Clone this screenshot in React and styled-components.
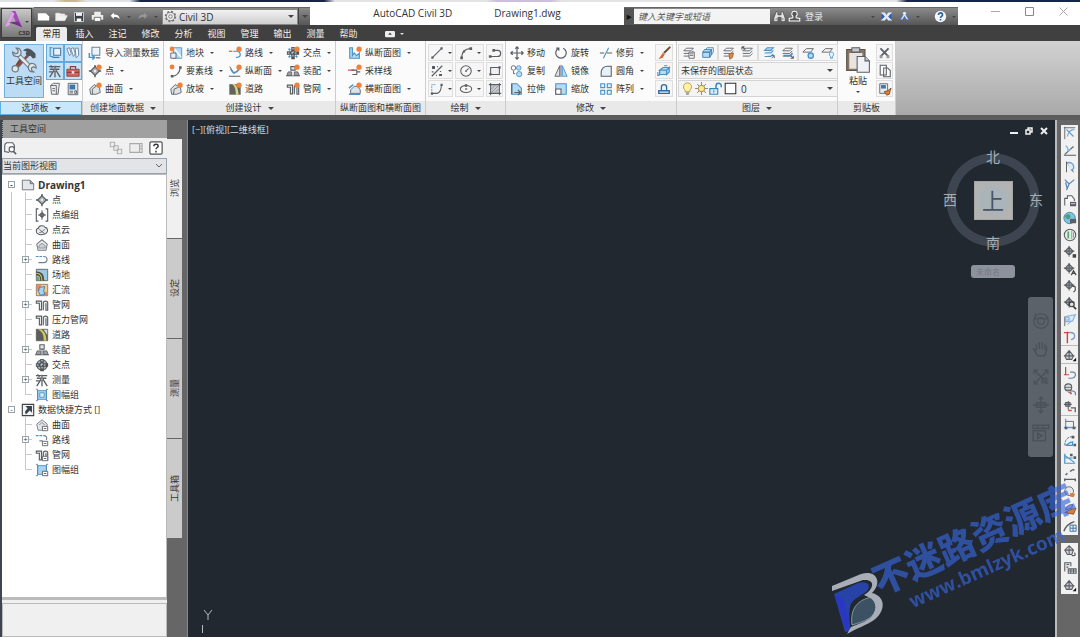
import React, { useState } from 'react'
import styled, { createGlobalStyle } from 'styled-components'

const GlobalStyle = createGlobalStyle`
  * {
    box-sizing: border-box;
  }

  body {
    margin: 0;
    background: #666;
    color: #333;
    font-family: 'Open Sans', 'Noto Sans CJK SC', sans-serif;
    font-size: 9px;
    line-height: 14px;
    overflow: hidden;
  }

  button, input, select {
    font: inherit;
    color: inherit;
    margin: 0;
    padding: 0;
    border: 0;
    border-radius: 0;
    background: none;
    appearance: none;
    outline: none;
  }

  ul {
    list-style: none;
    margin: 0;
    padding: 0;
  }
`

/* icons, all on a 16 x 16 grid */

const K = '#5a5e63'
const B = '#4a93c9'
const L = '#b5dcf3'
const O = '#f0813a'
const R = '#c8463c'

const dot = <circle cx='12.6' cy='3.6' r='3' fill={O} />
const dotLeft = <circle cx='3.5' cy='3.5' r='2.8' fill={O} />
const clipTag = <path d='M8.500 9.500h6v5h-6zM10 12h3' fill='#fff' stroke={K} />
const diamond = <><path d='M8 1v14M1 8h14' stroke={K} strokeWidth='1.600' /><path d='M8 3l5 5-5 5-5-5z' fill='#a9afb6' stroke={K} strokeWidth='1.300' /><circle cx='8' cy='8' r='1.500' fill='#e9ebed' /></>
const surface = <path d='M2 8l5-5 6 3 1 6-5 2H3z' fill='#dfe2e5' stroke={K} />
const page = <><path d='M1.500 2.500h9l4 4v7h-13z' fill='#e4e7ea' stroke='#686c70' /><path d='M10.500 2.500v4h4' fill='#aaa' stroke='#686c70' /></>
const layers = <path d='M2 5.500l3-3h8l-3 3zM2 8.500h8l3-3M2 11.500h8l3-3' fill='#f4f6f8' stroke={K} />
const pipes = <><path d='M1.500 3.500h6v10H5V6H1.500z' fill='#e9ebed' stroke={K} strokeWidth='1.300' /><path d='M9.500 14V5c0-2 5-2 5 0v9h-2V6' fill='#e9ebed' stroke={K} strokeWidth='1.300' /></>
const node = <path d='M7 1v12M1 7h12M7 2.500 11.500 7 7 11.500 2.500 7z' fill='#a9afb6' stroke={K} strokeWidth='1.400' />

const art = {
  file: page,
  newFile: <path d='M1 4h10l4 4v5H1z' fill='#fff' />,
  open: <path d='M1 13V4h5l1 1h5v2M1 13l3-6h11l-3 6z' fill='#f2f2f2' stroke='#e8e8e8' />,
  save: <><path d='M2 2h12v12H2z' fill='#3b4046' stroke='#e8e8e8' /><path d='M4 2.500h8v4H4z' fill='#eef4fa' /><path d='M5 10h6v4H5z' fill='#fff' /></>,
  print: <><path d='M4 2h8v4H4zM1 6h14v6H1z' fill='#eee' /><path d='M4 9h8v5H4z' fill='#fff' stroke='#555' /></>,
  undo: <path d='M6 3 2 7l4 4V8.500c4 0 6 .5 7 3C13 7 10 5.500 6 5.500z' fill='#fff' />,
  redo: <path d='M10 3l4 4-4 4V8.500c-4 0-6 .5-7 3C3 7 6 5.500 10 5.500z' fill='#969696' />,
  gear: <><circle cx='8' cy='8' r='6' fill='none' stroke='#6b6b6b' strokeWidth='2' strokeDasharray='2.400 2.300' /><circle cx='8' cy='8' r='5' fill='#eee' stroke='#6b6b6b' /><circle cx='8' cy='8' r='2.200' fill='none' stroke='#6b6b6b' /></>,
  binocular: <><path d='M4 2h2v4h4V2h2l3 8v4h-5V9H6v5H1v-4z' fill='#e6e6e6' stroke='#444' strokeWidth='.8' /><path d='M3 11h2M11 11h2' stroke='#555' /></>,
  user: <path d='M8 1.500a3.300 3.300 0 0 1 2 6V9.500l4.500 1v3h-13v-3l4.500-1V7.500a3.300 3.300 0 0 1 2-6z' fill='#555' stroke='#fff' strokeWidth='1.300' />,
  exchange: <><path d='M1 3h5l2 3 2-3h5l-4 5 4 5h-5l-2-3-2 3H1l4-5z' fill='#e1ebf8' /><path d='M2 4l4 4-4 4zM14 4l-4 4 4 4z' fill='#2f5fb5' /></>,
  app360: <><path d='M8 3 2.500 12h3L8 8l2.500 4h3z' fill='#dce8f8' stroke='#3d6cbd' /><circle cx='8' cy='4' r='2' fill='#dce8f8' /></>,
  help: <><circle cx='8' cy='8' r='7' fill='#f2f6fb' /><path d='M5.500 6c0-3.500 5-3.200 5 0 0 1.800-2.500 1.700-2.500 3.800M8 11v2' fill='none' stroke='#2b5f9d' strokeWidth='2' /></>,
  featured: <><rect x='0' y='3' width='16' height='10' rx='2' fill='#eee' /><path d='M8 5.500l3 3.500H5z' fill='#444' /></>,

  wrench: <>
    <path d='M6.200 7.800 3 12.600' stroke='#7c4337' strokeWidth='1.800' strokeLinecap='round' />
    <path d='M11 4.500 3 13.500' stroke='#8a5044' strokeWidth='1.600' strokeLinecap='round' />
    <path d='M7.500 2.500c2-1.600 4-1.200 5.500.4l1.600 1.500v2.300l-1.500.5-1.400-1.600-1.500.2-1.300-1.200.6-1.500z' fill='#4d545c' />
    <path d='M4.300 4.700 12 12.500' stroke='#6f7984' strokeWidth='2.600' />
    <path d='M4.300 4.700 12 12.500' stroke='#e4e9ee' strokeWidth='1.500' />
    <path d='M1.500 3.500l1.700 1 1.200-.4.300-1.400-1.200-1.500c1.700-.2 3 1 2.800 3-.2 1.400-1.300 2-2.500 1.800-1.500-.2-2.300-1.200-2.300-2.500z' fill='#dfe5ea' stroke='#6f7984' strokeWidth='.7' />
    <path d='M10.500 12c.2-1.500 1.200-2.200 2.500-2 1.200.2 2 1.200 1.900 2.600l-1.500-.8-1.200.8.300 1.600 1 .6c-2 .2-3.200-1-3-2.800z' fill='#dfe5ea' stroke='#6f7984' strokeWidth='.7' />
    <circle cx='3' cy='13' r='1.800' fill='#dfe5ea' stroke='#6f7984' strokeWidth='.7' />
  </>,
  panel: <><path d='M2.500 1v11M2.500 12H6M2.500 2H5' stroke={B} fill='none' strokeWidth='1.300' /><path d='M6.500 2.500h8v8h-8z' fill='#e5f2fb' stroke='#4878a4' strokeWidth='1.200' /><path d='M5 13h8' stroke='#4878a4' strokeWidth='1.400' /></>,
  props: <path d='M1 3l3-1 2 7-2 2zM5.500 3l3-1 2 7-2 3zM10.500 2.500h3.500l.5 8-3 3z' fill='#f3f8fc' stroke='#64819e' />,
  survey: <path d='M1 3h6M8 3h6M2 6h5M9 6h4M8 2v5M7 7l-5 8M9 7l5 8M8 8v7M3 1.500l2 3M1 9h4' fill='none' stroke={K} strokeWidth='1.500' />,
  toolbox: <><path d='M1 6h14v8H1z' fill='#d9645c' stroke='#8c3f3a' /><path d='M5 6V3h6v3M1 9.500h14' fill='none' stroke='#8c3f3a' strokeWidth='1.300' /><path d='M6.500 8h3v3h-3z' fill='#f3dcd9' /></>,
  sheet: <path d='M3 4l3-2.500h7L11.500 14H4zM3 4h6.500v10M5 7.500h3M5 10h3' fill='#eceef0' stroke={K} />,
  tablet: <><path d='M2.500 1.500h11v13h-11z' fill='#e4e9ee' stroke={K} /><path d='M4 3h6.500v5.500H4z' fill='#3a76ad' /><path d='M4 10.500h4M4 12.500h4M10 10h2v3h-2z' stroke={K} fill='none' /></>,

  importSurvey: <><path d='M4.500 1.500h9v9h-9z' fill='#eaf4fb' stroke='#6d8194' strokeWidth='1.200' /><path d='M1.500 8v5H7M5 10.500 7.500 13 5 15.500' fill='none' stroke={B} strokeWidth='1.700' /><path d='M9 13.500h5' stroke={K} strokeWidth='1.300' /></>,
  point: diamond,
  pointNew: <>{diamond}{dot}</>,
  surface,
  surfaceNew: <>{surface}<path d='M5 14V8l4-3' fill='none' stroke={K} />{dot}</>,
  parcel: <><path d='M5 2h9.500v12H5z' fill={L} stroke={B} /><path d='M2 8h6v6H2z' fill='#eef1f3' stroke={K} /><path d='M6 3l8 10' fill='none' stroke='#fff' strokeWidth='1.600' />{dotLeft}</>,
  feature: <><path d='M3 14c6 0 9-4 10-10' fill='none' stroke={K} strokeWidth='1.400' /><path d='M2 12.500h3v3H2zM11.500 2.500h3v3h-3z' fill={K} />{dotLeft}</>,
  grading: <>{surface}<path d='M5 14l1-6 5-2' fill='none' stroke={K} />{dot}</>,
  align: <><path d='M6 6h3c4 0 5 2 5 4s-2 3-5 3' fill='none' stroke={B} strokeWidth='1.400' /><path d='M1 6h4' stroke={R} strokeWidth='1.200' />{dot}</>,
  profile: <><path d='M2 3l5 8 5-5M1 14h13' fill='none' stroke={K} strokeWidth='1.100' /><path d='M3 6l3 4 4-1 3-3' fill='none' stroke={B} strokeWidth='1.600' />{dot}</>,
  road: <><path d='M1.500 2.500h13v12h-13z' fill='#5f645c' /><path d='M4 2c4 2 5 7 5 12.500h3C12 9 10 4 7 2z' fill='#ddd28b' />{dot}</>,
  cross: <><circle cx='8' cy='8' r='6' fill='#aab1b8' stroke={K} strokeWidth='1.300' /><path d='M6 1v5H1v4h5v5h4v-5h5V6h-5V1z' fill='#4b5157' /><path d='M8 2v12M2 8h12' stroke='#fff' strokeDasharray='2 2' /></>,
  crossNew: <><path d='M6 1v5H1v4h5v5h4v-5h5V6h-5V1z' fill='#4b5157' /><path d='M8 2v12M2 8h12' stroke='#fff' strokeDasharray='2 2' /><path d='M3 3l2 2M3 13l2-2M11 11l2 2' stroke={B} strokeWidth='2' />{dot}</>,
  assembly: <><path d='M5.500 2h5v5h-5z' fill='#e3e6e8' stroke={K} strokeWidth='1.200' /><path d='M1 13l1.500-4h4V13zM15 13l-1.500-4h-4V13z' fill='#9ba2a9' stroke={K} /><path d='M8 7v6M0 13.500h16' stroke={K} /></>,
  assemblyNew: <><path d='M5.500 3h5v4h-5z' fill='#e3e6e8' stroke={K} strokeWidth='1.200' /><path d='M1 13l1.500-4h4V13zM15 13l-1.500-4h-4V13z' fill='#9ba2a9' stroke={K} /><path d='M0 13.500h16' stroke={K} />{dot}</>,
  pipes,
  pipesNew: <>{pipes}{dot}</>,
  profView: <><path d='M2 2v12h11V8l-3 3-3-3-2 3V2z' fill={L} stroke={B} strokeWidth='1.300' />{dot}</>,
  sample: <><path d='M4 7h6v5H5M10 9h4' fill='none' stroke={K} strokeWidth='1.200' /><path d='M0 7h7' stroke={R} strokeWidth='1.300' />{dot}</>,
  secView: <><path d='M3 13V9l4-4h4l3 4v4z' fill='#dfe3e7' stroke={K} /><path d='M1 14h13M1 7l5-4' stroke={B} strokeWidth='1.500' />{dot}</>,

  line: <><path d='M3 13 13 3' stroke={K} strokeWidth='1.200' /><path d='M1.500 12h2.500v2.500H1.500zM12 1.500h2.500V4H12z' fill={K} /></>,
  arc: <><path d='M3 13c0-6 4-10 10-10' fill='none' stroke={K} strokeWidth='1.400' /><path d='M1.500 12h3v3h-3zM12 1.500h3v3h-3zM4.500 5h2.500v2.500H4.500z' fill={K} /></>,
  pline: <><path d='M2 12h9a3 3 0 0 0 0-7H6' fill='none' stroke={K} strokeWidth='1.300' /><path d='M5 3.500h3v3H5zM1 10.500h3v3H1z' fill={K} /></>,
  xline: <path d='M2 14 14 2M3 3h2v2H3zM8 3h1M2 9h2M11 12h2v1h-2zM12 8v1M7 13h1' stroke={K} strokeWidth='1.400' />,
  circle: <><circle cx='8' cy='8' r='6' fill='none' stroke={K} strokeWidth='1.200' /><path d='M8 8l3-3M7 8h2M8 7v2' stroke={K} strokeWidth='1.200' /></>,
  rect: <><path d='M3 4h10v8H3z' fill='#eef0f2' stroke={K} strokeWidth='1.200' /><path d='M1.500 10.500H4V13H1.500zM12 2.500h2.500V5H12z' fill={K} /></>,
  spline: <><path d='M2 13h6c4-1 5-4 5-10' fill='none' stroke={K} strokeWidth='1.200' /><path d='M2 13V3h5' fill='none' stroke={B} strokeDasharray='2 1' /><path d='M1 12h2.500v2.500H1zM12 2h2.500v2.500H12z' fill={K} /></>,
  ellipse: <><ellipse cx='8' cy='8' rx='6.500' ry='4' fill='none' stroke={K} strokeWidth='1.200' /><path d='M7 8h2.500M8 7v2M7 3h2v2H7z' fill={K} stroke={K} /></>,
  hatch: <><path d='M3 3h10v10H3z' fill='#c9cdd1' stroke={K} strokeWidth='1.200' /><path d='M4 8l4-4M4 12l8-8M8 12l4-4' stroke='#8a8f95' /><path d='M1 3h2V1M13 1v2h2M1 13h2v2M13 15v-2h2' fill='none' stroke={K} strokeWidth='1.200' /></>,

  move: <path d='M8 1v14M1 8h14M6 3l2-2 2 2M6 13l2 2 2-2M3 6 1 8l2 2M13 6l2 2-2 2' fill='none' stroke={K} strokeWidth='1.400' />,
  rotate: <path d='M5.500 2.500a6 6 0 1 0 5 0M2.500 2.500h3v3' fill='none' stroke={K} strokeWidth='1.400' />,
  trim: <><path d='M1 8h5M9 8h6' stroke={K} strokeWidth='1.200' /><path d='M5 14 11 2' stroke={B} strokeWidth='1.200' /></>,
  copy: <><circle cx='4' cy='4.500' r='2.600' fill='#fff' stroke={K} /><circle cx='10' cy='4.500' r='2.600' fill={L} stroke={B} /><circle cx='10.500' cy='11.500' r='3' fill={L} stroke={B} /><path d='M4 8v3h2' fill='none' stroke={K} /></>,
  mirror: <><path d='M6.500 2v12H1z' fill='#dfe3e7' stroke={K} /><path d='M9.500 2v12H15z' fill={L} stroke={B} /><path d='M8 1v14' stroke={K} /></>,
  fillet: <path d='M2.500 14V9a7 7 0 0 1 7-6.500H14V14z' fill='#e7f1f8' stroke={K} strokeWidth='1.200' />,
  stretch: <><path d='M2 2h6l5 5v7H2z' fill={L} stroke={B} strokeWidth='1.200' /><path d='M5 12h7M9 9l3 3-3 3M2 2v12' fill='none' stroke={K} strokeWidth='1.300' /></>,
  scale: <><path d='M2 2h12v12H2z' fill={L} stroke={B} strokeWidth='1.200' /><path d='M2 8h6v6H2z' fill='#fff' stroke={K} strokeWidth='1.200' /></>,
  array: <path d='M2 2h4.500v4.500H2zM9.500 2H14v4.500H9.500zM2 9.500h4.500V14H2zM9.500 9.500H14V14H9.500z' fill='#e6f3fb' stroke={B} strokeWidth='1.300' />,
  brush: <><path d='M14.500 1.500 8 8' stroke='#6b4630' strokeWidth='2.200' strokeLinecap='round' /><path d='M7 7.500l2 2-2.500 4-5 1.500 3-4z' fill='#d7672d' /><path d='M6.500 7l3 3' stroke='#bbb' strokeWidth='1.300' /></>,
  explode: <><path d='M3 7l4-3h7l-3 3zM3 7h8v5H3zM11 7l3-3v5l-3 3z' fill={L} stroke={B} strokeWidth='1.400' /><path d='M1 9v4h2M8 2h4' fill='none' stroke={B} strokeWidth='1.300' /></>,
  offset: <path d='M2 13v-3h3V6a3 3 0 0 1 6 0v4h3v3zM5 10h6' fill='#e6f3fb' stroke='#35699a' strokeWidth='1.500' />,

  lay1: <>{layers}<path d='M8 7h6v7H8zM9 9h4M9 11h4' fill='#fff' stroke={K} /></>,
  lay2: <><path d='M2 7h8v6H2zM2 7l2-3h8l-2 3zM10 7l2-3v6l-2 3z' fill={L} stroke='#3f7fb5' /><path d='M5 4l2-2h7v5l-2 3' fill='none' stroke='#3f7fb5' /></>,
  lay3: <>{layers}<path d='M8 9l5-1-1 5-3 2z' fill='#e08a45' stroke='#a65a22' /></>,
  lay4: <>{layers}<path d='M1 1l4 3M1 1v3M1 1h3' stroke={K} strokeWidth='1.200' /></>,
  lay5: <><path d='M3 5l3-3h7l-3 3zM3 8h7l3-3M3 12h7l3-3' fill={L} stroke={B} strokeWidth='1.200' /><path d='M11 14l3-3M14 14v-3h-3' fill='none' stroke={K} /></>,
  lay6: <>{layers}<path d='M3 11h8l2-3' stroke={B} strokeWidth='2' fill='none' /><path d='M11 11l3 3M14 11v3h-3' fill='none' stroke={K} strokeWidth='1.200' /></>,
  lay7: <><path d='M1 7l4-4h8l-3 4z' fill='#f4f6f8' stroke={K} /><circle cx='10' cy='11' r='3' fill={L} stroke={B} strokeWidth='1.500' /></>,
  lay8: <><path d='M1 7l4-4h8l-3 4z' fill='#f4f6f8' stroke={K} /><path d='M12 7c3 0 3 4 1 5v2h-2v-2c-2-1-2-5 1-5z' fill='#e6f3fb' stroke={B} /></>,
  bulb: <><path d='M8 1a5 5 0 0 1 3 9v2H5v-2a5 5 0 0 1 3-9z' fill='#fff2a6' stroke='#b39434' /><path d='M6 13.500h4M6.500 15h3' stroke={K} /></>,
  sun: <><path d='M8 0v16M0 8h16M2.500 2.500l11 11M13.500 2.500l-11 11' stroke='#777' /><circle cx='8' cy='8' r='4' fill='#ffe98c' stroke='#8e7a3a' /></>,
  lock: <><path d='M1 7.500h9V14H1z' fill='#d9eefb' stroke='#3a86b9' strokeWidth='1.300' /><path d='M8 7V4.500a3 3 0 0 1 6 0V6' fill='none' stroke='#3a86b9' strokeWidth='1.700' /><path d='M5.500 9.500v2.500' stroke='#3a86b9' strokeWidth='1.300' /></>,
  swatch: <path d='M1.500 1.500h13v13h-13z' fill='#fff' stroke='#333' strokeWidth='1.300' />,
  paste: <><path d='M1.500 2h10.500v12H1.500z' fill='#857566' stroke='#5e5348' strokeWidth='.6' /><path d='M3 4h7.500v9H3z' fill='#e8e5e0' /><path d='M4.500 1h4.500v2.500H4.500z' fill='#c5c9cd' stroke={K} strokeWidth='.6' /><path d='M7.500 6H12l2.500 2.500v6.500h-7z' fill='#eef2f6' stroke={K} strokeWidth='.6' /><path d='M12 6v2.500h2.500' fill='#c4cad0' stroke={K} strokeWidth='.6' /></>,
  cut: <><path d='M3 3l10 10M13 3 3 13' stroke={K} strokeWidth='2.200' /><path d='M2 11.500h3.500V15H2zM10.500 11.500H14V15h-3.500z' fill='#999' /></>,
  pages: <path d='M2.500 1.500h7v11h-7zM6.500 4.500H11l3 3v7H6.500z' fill='#fff' stroke={K} strokeWidth='1.200' />,
  match: <><path d='M2 2h9v11H2z' fill='#e8edf2' stroke={K} /><path d='M3.500 3.500h5.500v4H3.500z' fill='#3a76ad' /><path d='M15 7l-4 3-4 1 3 4 3-1 1-4z' fill='#d77f38' stroke='#8a4e1f' /></>,

  find: <><path d='M2 4l2-2h7l2 3v4M2 4v8l5 1' fill='#fff' stroke={K} strokeWidth='1.300' /><circle cx='10' cy='9.500' r='3' fill='#fff' stroke={K} strokeWidth='1.300' /><path d='M12 12l3 3' stroke={K} strokeWidth='1.800' /></>,
  treeTool: <path d='M1.500 1.500h5v5h-5zM5.500 5.500h5v5h-5zM9.500 9.500h5v5h-5z' fill='#eee' stroke='#b0b0b0' strokeWidth='1.200' />,
  window: <path d='M1 3h14v10H1zM12 3v10M12.500 6H15M12.500 9H15' fill='#eee' stroke='#aaa' strokeWidth='1.200' />,
  helpBox: <><rect x='1' y='1' width='14' height='14' rx='1.500' fill='#fff' stroke='#555' strokeWidth='1.400' /><path d='M5.500 6c0-3 5-3 5 0 0 1.500-2.500 1.500-2.500 3.500M8 11v2' fill='none' stroke='#333' strokeWidth='1.600' /></>,
  pointGroup: <><path d='M4 1H1.500v14H4M12 1h2.500v14H12' fill='none' stroke={K} strokeWidth='1.300' /><path d='M8 2.500v11M3.500 8h9M8 5l3 3-3 3-3-3z' fill='#aeb4ba' stroke={K} strokeWidth='1.200' /></>,
  cloud: <><path d='M1.500 9c0-2 1-3 2.500-3 0-3 6-4 7.500-1 2.500 0 4 4 2 6-1 2.500-8 3-10 1.500C2 12 1.500 10 1.500 9z' fill='#e8eaec' stroke={K} strokeWidth='1.200' /><path d='M5 7l3 3 3-3M5 11l3-1 3 2' fill='none' stroke={K} /></>,
  tin: <><path d='M2 7l6-5 6 5-1.500 7h-9z' fill='#eceef0' stroke='#777d84' strokeWidth='1.200' /><path d='M4.500 8.500 8 6l3.500 2.500v3h-7z' fill='#cbd0d5' stroke='#868c93' /></>,
  route: <><path d='M1 4h9' stroke={B} strokeWidth='1.400' strokeDasharray='3 1' /><path d='M10 4c5 0 5 7 0 7H4' fill='none' stroke='#6d8196' strokeWidth='1.300' /></>,
  site: <><path d='M1.500 1.500h13v13h-13z' fill='#9cc9e6' stroke={K} /><path d='M1.500 4c7 0 9 4 9 10.500H6c0-5-1-6-4.500-6z' fill='#474c46' /><path d='M1.500 6c5 0 6.500 3 6.500 8.500' fill='none' stroke='#e0c548' strokeWidth='1.300' /><path d='M2 10h3v4H2z' fill='#78a567' /></>,
  catchment: <><path d='M1.500 1.500h13v13h-13z' fill='#f4d27a' stroke='#8b7468' /><path d='M2 2h5l-1 5-4 3z' fill='#e58e58' /><path d='M11 10h3v4H9z' fill='#e58e58' /><path d='M5 5l6-1-1 5 1 4-5 1-2-4z' fill='#a7d3f3' stroke='#2e79b7' /></>,
  highway: <><path d='M1.500 1.500h13v13h-13z' fill='#5b5f59' stroke={K} /><path d='M3 1.500c6 3 7 7 7 13h3C13 8 11 4 7 1.500z' fill='#d4c25e' /><path d='M10 2h4v6z' fill='#d3dfe7' /></>,
  frame: <><path d='M3 3h10v10H3z' fill='#a9d4f1' stroke={B} /><path d='M5.500 5.500h5v5h-5z' fill='#dff0fa' stroke={B} /><path d='M1 1.500h2v13H1M15 1.500h-2v13h2' fill='none' stroke='#4f83ad' /></>,
  shortcut: <><path d='M1.500 1.500h13v13h-13z' fill='#f1f3f5' stroke='#444' strokeWidth='1.300' /><path d='M5 3.500h7.500V11L10 8.500 5.500 13l-1-3L7.500 6z' fill='#39414b' /></>,
  tinRef: <><path d='M2 7l6-5 6 5-1.500 7h-9zM5 8l3-3 3 3' fill='#e3e6e9' stroke='#777d84' />{clipTag}</>,
  routeRef: <><path d='M1 3h9' stroke={B} strokeWidth='1.400' strokeDasharray='3 1' /><path d='M10 3c3 0 4 2 3 5M5 9h4' fill='none' stroke='#6d8196' strokeWidth='1.300' />{clipTag}</>,
  pipesRef: <>{pipes}{clipTag}</>,
  frameRef: <><path d='M3 3h10v10H3z' fill='#a9d4f1' stroke={B} /><path d='M1 1.500h2v13H1M15 1.500h-2v13h2' fill='none' stroke='#4f83ad' />{clipTag}</>,

  t1: <><path d='M1 2h13M2 1v14' stroke={K} fill='none' /><path d='M4 4l8 8M13 4c-4 0-7 3-8 8' stroke='#6b9ed0' strokeWidth='1.400' fill='none' /></>,
  t2: <><path d='M1 14h14M2 13 12 4' fill='none' stroke={K} strokeWidth='1.300' /><path d='M3 3l2 2 1 4 3-2' stroke='#7fb2e0' strokeWidth='1.600' fill='none' /></>,
  t3: <><path d='M4 14V2l8 12' fill='none' stroke={K} strokeWidth='1.100' /><path d='M5 3c6-1 8 3 7 7l-3 2' fill='#dcecf8' stroke='#6b9ed0' strokeWidth='1.500' /></>,
  t4: <path d='M2 3l5 5 6-5M4 15l3-7M3 6l2 8' fill='none' stroke='#5b86ad' strokeWidth='1.400' />,
  t5: <><path d='M2 13V5h3V2h5l3 4v2' fill='#f6f6f6' stroke={K} strokeWidth='1.200' /><path d='M8 9h7v5H8z' fill={K} /><path d='M9 11h5' stroke='#ddd' /></>,
  globe: <><circle cx='7.500' cy='8' r='6.500' fill='#7fc3e0' stroke='#4a7f95' /><path d='M2 6c4-5 8-1 6 2s-4 1-6-2z' fill='#4b9c83' /><path d='M8 9h7v5H8z' fill='#5a6068' /></>,
  globe2: <><circle cx='8' cy='8' r='6.500' fill='#e7ece9' stroke={K} strokeWidth='1.200' /><path d='M5 4h2v8H5z' fill='#4fae6f' /><path d='M10 3v10M12 5v6' stroke='#8a8f95' fill='none' /></>,
  t8: <>{node}<path d='M11 10.500h4v4h-4z' fill='#444' /></>,
  t9: <>{node}<path d='M9.500 15l2.500-5 3 5M10.500 13h3' fill='none' stroke='#444' strokeWidth='1.300' /></>,
  t10: <>{node}<path d='M10 8l4 1v4l-2 2' fill='#fff' stroke='#444' strokeWidth='1.300' /></>,
  t11: <>{node}<circle cx='10' cy='9.500' r='2.800' fill='#ddd' stroke='#333' strokeWidth='1.300' /><path d='M12 12l3 3' stroke='#333' strokeWidth='1.900' /></>,
  t12: <><path d='M2 15V4' stroke={K} /><path d='M3 4l11-2-3 7-8 1z' fill='#dcecf8' stroke='#7fb2e0' strokeWidth='1.300' /><path d='M4 5h3v3H4M5 13l4-3' fill='none' stroke='#6b9ed0' /></>,
  t13: <><path d='M1 3h6M5 2v13' stroke={R} strokeWidth='1.600' /><path d='M7 3c8-1 8 7 2 8' fill='none' stroke='#7f9bc4' strokeWidth='1.500' /></>,
  t14: <><path d='M2 9l5-6 5 6-2 4H4zM1 9h12M7 3v10' fill='#c7cbd0' stroke={K} strokeWidth='1.200' /><path d='M15 11v4h-4z' fill='#111' /></>,
  t15: <><path d='M3 1v9M1 10h6' stroke={R} strokeWidth='1.400' /><path d='M8 7h3c5 0 4 7-2 7H6' fill='none' stroke='#6f85a5' strokeWidth='1.400' /></>,
  t16: <><circle cx='6' cy='5' r='4' fill='#ddd' stroke={K} strokeWidth='1.200' /><path d='M2 5h8M3 8h6v3H6' fill='none' stroke={K} /><path d='M8 12h2' stroke={R} strokeWidth='1.600' /><path d='M10 9c4 0 5 3 4 5' fill='none' stroke='#6f85a5' strokeWidth='1.400' /></>,
  t17: <><path d='M6 1v10M1 5h9M3 3h5v4H3z' fill='#ccc' stroke={K} strokeWidth='1.200' /><path d='M6 12h4' stroke={R} strokeWidth='1.600' /><path d='M9 9h5v5' fill='none' stroke={K} strokeWidth='1.400' /></>,
  t18: <><path d='M3 2v12M1 12h14' stroke='#6b9ed0' strokeWidth='1.500' /><path d='M3 5h9v7' fill='none' stroke={K} /><path d='M11 11h3v3h-3zM2 11h3v3H2z' fill={K} /></>,
  t19: <><path d='M2 13C2 6 6 3 11 3' fill='none' stroke={K} strokeDasharray='3 1' /><path d='M3 13c3-1 4-4 8-4v4z' fill='#dcecf8' stroke={B} strokeWidth='1.400' /><path d='M10 2h3v3h-3zM12 11h3v3h-3z' fill={K} /></>,
  t20: <><path d='M2 3v11h12M2 5l11 8M3 8h8' fill='none' stroke={B} strokeWidth='1.400' /><path d='M8 3h3v3H8zM12 6h3v3h-3z' fill={K} /></>,
  t21: <path d='M2 13h12M3 8l2-2M8 4l3-2M2 12v3M14 12v3M11 2h2' fill='none' stroke={K} strokeWidth='1.600' />,
  t22: <><circle cx='7' cy='7' r='5' fill='#e6e9ec' stroke={K} /><path d='M8 9l6 1-2 4-4-1z' fill='#d77f38' /></>,
  t23: <><path d='M3 9c1-5 4-6 8-6l-1 4z' fill='#ddd' stroke={K} /><path d='M2 12l6-3 7-2-3 7-5-1z' fill='#d77f38' stroke='#8a4e1f' /></>,
  t24: <><path d='M1 14C3 8 6 5 13 3' fill='none' stroke={K} strokeWidth='1.600' /><path d='M8 7h7v7H8zM8 10.500h7M11.500 7v7' fill='#e6f3fb' stroke='#35699a' /></>,
  t25: <><path d='M2 7l5-5 5 5-2 5H5zM2 7h10M7 2v10' fill='#d3d6d9' stroke={K} strokeWidth='1.200' /><path d='M10 13c4 1 5-1 3-3' fill='none' stroke={K} strokeWidth='1.400' /></>,
  t26: <path d='M2 12V2h7v4M4 4h3M4 7h2M6 9h9v5H6zM6 11.500h9M9 9v5M12 9v5' fill='#e3e5e7' stroke={K} strokeWidth='1.200' />,

  wheel: <><circle cx='8' cy='8' r='6.500' fill='none' stroke='#4a5158' /><circle cx='8' cy='8' r='3' fill='none' stroke='#4a5158' /><path d='M3 1v5h10V3' fill='none' stroke='#4a5158' /></>,
  hand: <path d='M4 9V4M6.500 8V2M9 8V2M11.500 9V3.500M4 9 1.500 8 5 14h6l2-5V5' fill='none' stroke='#4a5158' strokeWidth='1.200' />,
  zoomAll: <path d='M2 2l12 12M14 2 2 14M2 5V2h3M11 2h3v3M2 11v3h3M9 9h4v4H9z' fill='none' stroke='#4a5158' strokeWidth='1.200' />,
  orbit: <path d='M8 1v14M1 8h14M6 3l2-2 2 2M4 6h8v4H4zM6 13l2 2 2-2' fill='none' stroke='#4a5158' strokeWidth='1.200' />,
  motion: <path d='M1 1h14v3H1zM5 1v3M10 1v3M1 6h11v9H1zM5 8l4 2.500L5 13z' fill='none' stroke='#4a5158' strokeWidth='1.200' />
}

const Svg = styled.svg`
  flex: none;
  display: block;
  width: ${props => props.$size}px;
  height: ${props => props.$size}px;
`

const Icon = ({ name, size = 14 }) => <Svg viewBox='0 0 16 16' $size={size} aria-hidden='true'>{art[name]}</Svg>

const Caret = styled.span`
  flex: none;
  width: 0;
  height: 0;
  border: ${props => props.$big ? 3 : 2}px solid transparent;
  border-top-color: ${props => props.$light ? '#ddd' : '#444'};
  border-bottom: 0;
`

/* title bar */

const Window = styled.div`
  display: flex;
  flex-direction: column;
  height: 100vh;
`

const DesktopEdge = styled.div`
  flex: none;
  height: 2px;
  background: linear-gradient(90deg, #dfe3e6 0 5%, #cbb98c 6% 7%, #dfe3e6 8% 12%, #182545 13% 30%, #e4e4e4 31% 45%, #cdbfdc 46% 51%, #e4e4e4 52% 83%, #15264a 84%);
`

const Header = styled.header`
  flex: none;
  display: grid;
  grid-template-columns: 34px 1fr;
`

const AppCorner = styled.div`
  grid-row: 1 / 3;
  padding: 6px 2px 2px 1px;
  background: linear-gradient(#fff 0 5px, #808080 6px, #454545 26px);
`

const AppButton = styled.button`
  display: flex;
  align-items: flex-start;
  position: relative;
  width: 31px;
  height: 30px;
  border: 1px solid #3c3c3c;
  background: linear-gradient(#c9c9c9, #777);
  font-size: 6px;
  font-weight: bold;
`

const AppName = styled.span`
  position: absolute;
  right: 1px;
  bottom: -3px;
`

const AppCaret = styled(Caret)`
  margin: 12px 0 0 0;
`

const TitleBar = styled.div`
  display: flex;
  align-items: flex-end;
  height: 23px;
  background: #fff;
`

const QuickBar = styled.div`
  display: flex;
  align-items: center;
  height: 18px;
  border-top: 1px solid #666;
  background: linear-gradient(#8b8b8b, #565656);
`

const QuickButton = styled.button`
  display: flex;
  align-items: center;
  justify-content: center;
  width: ${props => props.$narrow ? 9 : 18}px;
  height: 17px;
  color: #eee;
`

const Workspace = styled.label`
  display: flex;
  align-items: center;
  width: 136px;
  height: 16px;
  margin-left: 2px;
  padding: 0 3px 0 1px;
  border: 1px solid #888;
  background: linear-gradient(#f2f2f2, #cfcfcf);

  select {
    flex: 1;
    padding-left: 2px;
    font-size: 10px;
  }
`

const QuickMenu = styled.button`
  display: flex;
  align-items: center;
  justify-content: center;
  width: 12px;
  height: 17px;
  border-left: 1px solid #444;
`

const Title = styled.h1`
  flex: 1;
  display: flex;
  justify-content: center;
  gap: 42px;
  margin: 0;
  padding-bottom: 5px;
  font-size: 10px;
  font-weight: normal;
  white-space: nowrap;
`

const InfoCenter = styled(QuickBar)`
  color: #eee;
`

const SearchToggle = styled.button`
  width: 10px;
  height: 17px;
  background: #555;
  color: #111;
  font-size: 6px;
`

const SearchInput = styled.input`
  width: 136px;
  height: 15px;
  padding: 0 4px;
  background: #f3f3f3;

  &::placeholder {
    color: #555;
    font-style: italic;
    opacity: 1;
  }
`

const SignIn = styled.button`
  display: flex;
  align-items: center;
  gap: 4px;
  flex: none;
  width: 80px;
`

const WinButtons = styled.div`
  display: flex;
  padding-left: 20px;
`

const WinButton = styled.button`
  width: 34px;
  height: 23px;

  svg {
    display: block;
    margin: 0 auto 4px;
  }
`

const Tabs = styled.nav`
  display: flex;
  gap: 2px;
  height: 16px;
  padding: 2px 0 0 2px;
  background: #404040;
`

const Tab = styled.button`
  display: flex;
  align-items: center;
  justify-content: center;
  gap: 5px;
  width: 31px;
  height: 14px;
  border-radius: 2px 2px 0 0;
  background: ${props => props.$active ? '#ececec' : 'none'};
  color: ${props => props.$active ? '#222' : '#f2f2f2'};
`

/* ribbon */

const Ribbon = styled.section`
  flex: none;
  display: flex;
  height: 79px;
  border-bottom: 5px solid #5c5c5c;
  background: linear-gradient(#d2d2d2, #a9a9a9);
`

const PanelBox = styled.div`
  display: flex;
  flex-direction: column;
  width: ${props => props.$width}px;
  border-right: 1px solid #ccc;
  background: #fbfbfb;
`

const PanelBody = styled.div`
  display: grid;
  grid-template-columns: ${props => props.$cols || '1fr'};
  grid-template-rows: repeat(3, 18px);
  flex: 1;
  padding: 3px 1px 0 ${props => props.$pad}px;
`

const PanelTitle = styled.button`
  display: flex;
  align-items: center;
  justify-content: center;
  gap: 6px;
  height: 14px;
  border: 1px solid ${props => props.$hot ? '#58b2e4' : '#e9e9e9'};
  background: ${props => props.$hot ? '#c9e7fa' : '#e9e9e9'};
  white-space: nowrap;
`

const Command = styled.button`
  display: flex;
  align-items: center;
  gap: 3px;
  height: 18px;
  white-space: nowrap;

  ${Caret} {
    margin-left: 3px;
  }
`

const Cell = styled.button`
  display: flex;
  align-items: center;
  justify-content: center;
  gap: 4px;
  height: ${props => props.$on ? 18 : 17}px;
  margin-right: ${props => props.$on ? 0 : 2}px;
  border: 1px solid ${props => props.$on ? '#62a9dd' : '#dedede'};
  background: ${props => props.$on ? '#c6e2f7' : '#f6f6f6'};
`

const BigButton = styled.button`
  grid-row: 1 / 4;
  display: flex;
  flex-direction: column;
  align-items: center;
  margin-right: ${props => props.$on ? 2 : 0}px;
  padding-top: 1px;
  border: 1px solid ${props => props.$on ? '#6fb1e1' : 'transparent'};
  background: ${props => props.$on ? '#bcdcf5' : 'none'};
  white-space: nowrap;
`

const BigLabel = styled.span`
  padding-bottom: 3px;
`

const LayerTools = styled.div`
  display: flex;
  justify-content: space-between;
`

const LayerPair = styled.div`
  display: grid;
  grid-template-columns: 19px 19px;
  height: 17px;
  border: 1px solid #dcdcdc;
  background: #f6f6f6;
`

const LayerButton = styled.button`
  display: flex;
  align-items: center;
  justify-content: center;
`

const Combo = styled.label`
  display: flex;
  align-items: center;
  gap: 1px;
  height: 17px;
  padding: 0 4px 0 2px;
  border: 1px solid #d4d4d4;
  background: #f4f4f4;

  select {
    flex: 1;
  }
`

const LayerCombo = styled(Combo)`
  select {
    padding-left: 3px;
    font-size: 10px;
  }
`

const Panel = ({ title, width, pad = 5, cols, hot, plain, children }) => (
  <PanelBox $width={width}>
    <PanelBody $pad={pad} $cols={cols}>{children}</PanelBody>
    <PanelTitle $hot={hot}>{title}{!plain && <Caret $big />}</PanelTitle>
  </PanelBox>
)

const Commands = ({ items }) => items.map(([icon, label, menu]) => (
  <Command key={label}>
    <Icon name={icon} />
    {label}
    {menu && <Caret />}
  </Command>
))

/* toolspace */

const Body = styled.div`
  flex: 1;
  display: flex;
  min-height: 0;
`

const Toolspace = styled.aside`
  flex: none;
  display: flex;
  flex-direction: column;
  width: 167px;
  border-left: 2px solid #3c4650;
  background: #f0f0f0;
`

const ToolspaceTitle = styled.h2`
  height: 18px;
  margin: 0;
  padding: 2px 0 0 7px;
  border-left: 1px dotted #444;
  background: #a0a0a0;
  font-size: 9px;
  font-weight: normal;
`

const ToolspaceBar = styled.div`
  display: flex;
  align-items: center;
  gap: 6px;
  height: 20px;
  padding: 0 4px 0 1px;
`

const Spacer = styled.span`
  flex: 1;
`

const ViewSelect = styled(Combo)`
  height: 16px;
  padding: 0 3px 0 0;
  border: 1px solid #98a3ac;
  background: #e2e4e7;
`

const Tree = styled.ul`
  flex: 1;
  padding-top: 2px;
  border: 1px solid #bbb;
  border-width: 1px 1px 3px 0;
  background: #fff;
`

const TreeRow = styled.li`
  display: flex;
  align-items: center;
  gap: 3px;
  height: 15px;
  padding-left: 5px;
  font-size: ${props => props.$bold ? 10 : 9}px;
  font-weight: ${props => props.$bold ? 'bold' : 'normal'};
  white-space: nowrap;
`

const Rail = styled.span`
  display: flex;
  align-items: center;
  justify-content: center;
  width: 11px;
  height: 15px;
  background:
    linear-gradient(#c9c9c9, #c9c9c9) 4px 0 / 1px ${props => props.$line === 'end' ? 8 : 15}px no-repeat,
    linear-gradient(#c9c9c9, #c9c9c9) 5px 7px / ${props => props.$branch ? 6 : 0}px 1px no-repeat;
`

const Toggle = styled.button`
  display: flex;
  align-items: center;
  justify-content: center;
  width: 7px;
  height: 7px;
  margin: 0 3px 0 1px;
  border: 1px solid #9aa2aa;
  background: #fff;
  font-size: 7px;
  line-height: 5px;
`

const Preview = styled.div`
  height: 34px;
  margin-top: 3px;
  border: 1px solid #bbb;
`

const SideTabs = styled.div`
  flex: none;
  width: 21px;
  padding: 19px 5px 0 0;
  border-right: 1px solid #888;
  background: #666;
`

const SideTab = styled.button`
  display: flex;
  align-items: center;
  justify-content: center;
  width: 15px;
  height: 99px;
  margin-bottom: 1px;
  background: ${props => props.$active ? '#f0f0f0' : '#cbcbcb'};
  writing-mode: vertical-rl;

  span {
    transform: rotate(180deg);
    text-orientation: sideways;
  }
`

/* drawing area */

const Canvas = styled.main`
  flex: 1;
  display: flex;
  flex-direction: column;
  position: relative;
  padding: 3px 4px 0 4px;
  background: #212830;
  color: #d6d9dc;
`

const ViewBar = styled.div`
  display: flex;
  justify-content: space-between;
`

const DocButtons = styled.div`
  display: flex;
  gap: 1px;
`

const DocButton = styled.button`
  display: flex;
  align-items: center;
  justify-content: center;
  width: 14px;
  height: 15px;
`

const Compass = styled.div`
  position: absolute;
  top: 28px;
  right: 10px;
  display: grid;
  grid-template-columns: 18px 68px 18px;
  grid-template-rows: 18px 68px 18px;
  place-items: center;
  background: radial-gradient(circle, transparent 37px, #3d4650 38px 46px, transparent 47px);
  color: #a9adb0;
  font-size: 14px;
  line-height: 18px;
`

const CompassMark = styled.span`
  grid-area: ${props => props.$area};
`

const CubeFace = styled.button`
  grid-area: 2 / 2;
  width: 39px;
  height: 39px;
  border: 1px solid #a5a5a2;
  background: radial-gradient(#a9b4bb 40%, #b3b3b1 75%);
  color: #4a545f;
  font-size: 22px;
  line-height: 36px;
`

const UcsButton = styled.button`
  position: absolute;
  top: 145px;
  right: 40px;
  width: 44px;
  height: 13px;
  padding-left: 5px;
  border-radius: 3px;
  background: #8d929c;
  color: #737986;
  font-size: 8px;
  line-height: 13px;
  text-align: left;
`

const NavBar = styled.div`
  position: absolute;
  top: 177px;
  right: 2px;
  display: flex;
  flex-direction: column;
  align-items: center;
  gap: 10px;
  width: 25px;
  padding: 15px 0;
  border-radius: 3px;
  background: #5b6269;
`

const NavButton = styled.button`
  height: 18px;
`

const UcsMark = styled.div`
  position: absolute;
  left: 12px;
  bottom: 0;
`

/* right hand toolbars */

const ToolDock = styled.aside`
  flex: none;
  display: flex;
  flex-direction: column;
  width: 25px;
  padding: 5px 2px 0 4px;
  border-left: 2px solid #b9bcbe;
  background: #666;
`

const ToolStrip = styled.div`
  display: flex;
  flex-direction: column;
  flex: 0 0 ${props => props.$short ? 10 : 80}%;
  margin-bottom: 8px;
  background: #f1f1f1;
`

const ToolGroup = styled.div`
  display: flex;
  flex-direction: column;
  justify-content: space-around;
  align-items: center;
  flex: ${props => props.$count};

  & + & {
    border-top: 1px solid #bbb;
  }
`

const ToolButton = styled.button`
  height: 14px;
`

/* site mark over the lower right corner */

const Mark = styled.div`
  position: fixed;
  right: 0;
  bottom: 0;
  width: 250px;
  height: 170px;
  pointer-events: none;
`

const MarkText = styled.div`
  position: absolute;
  left: ${props => props.$left}px;
  bottom: ${props => props.$bottom}px;
  transform: rotate(-24deg);
  transform-origin: 0 100%;
  color: rgba(56, 100, 220, .65);
  font-size: ${props => props.$size}px;
  line-height: ${props => props.$size}px;
  font-weight: ${props => props.$heavy ? 900 : 700};
  white-space: nowrap;
`

const MarkLogo = styled.svg`
  position: absolute;
  left: 0;
  bottom: 0;
`

const tabs = ['常用', '插入', '注记', '修改', '分析', '视图', '管理', '输出', '测量', '帮助']

const drawing = [
  ['point', '点'],
  ['pointGroup', '点编组'],
  ['cloud', '点云'],
  ['tin', '曲面'],
  ['route', '路线', true],
  ['site', '场地'],
  ['catchment', '汇流'],
  ['pipes', '管网', true],
  ['pipes', '压力管网'],
  ['highway', '道路'],
  ['assembly', '装配', true],
  ['cross', '交点'],
  ['survey', '测量', true],
  ['frame', '图幅组']
]

const shortcuts = [
  ['tinRef', '曲面'],
  ['routeRef', '路线', true],
  ['pipesRef', '管网'],
  ['frameRef', '图幅组']
]

const toolGroups = [
  ['t1', 't2', 't3', 't4', 't5', 'globe', 'globe2', 't8', 't9', 't10', 't11', 't12', 't13'],
  ['t14'],
  ['t15', 't16', 't17'],
  ['t18', 't19', 't20', 't21', 't22', 't23', 't24']
]

const Blank = styled.span`
  width: 11px;
`

const Branch = ({ items, rail }) => items.map(([icon, label, more], i) => (
  <TreeRow key={label}>
    {rail ? <Rail /> : <Blank />}
    <Rail $branch $line={i === items.length - 1 ? 'end' : 'full'}>
      {more && <Toggle aria-label={label}>+</Toggle>}
    </Rail>
    <Icon name={icon} />
    {label}
  </TreeRow>
))

const ToolButtons = ({ names }) => (
  <ToolGroup $count={names.length}>
    {names.map(name => <ToolButton key={name} aria-label={name}><Icon name={name} /></ToolButton>)}
  </ToolGroup>
)

export default () => {
  const [tab, setTab] = useState('常用')
  const [side, setSide] = useState('浏览')

  return <Window>
    <GlobalStyle />
    <DesktopEdge />
    <Header>
      <AppCorner>
        <AppButton aria-label='Civil 3D'>
          <Svg viewBox='0 0 22 24' $size={23} aria-hidden='true'>
            <path d='M2 19 9 2h4l7 17-5-2-4-9-4 9z' fill='#a24bb5' />
            <path d='M2 19 9 2l3 3-5 12z' fill='#dba5e4' />
            <path d='M6 14l10-1 4 6-8-3z' fill='#74308a' />
          </Svg>
          <AppCaret />
          <AppName>C3D</AppName>
        </AppButton>
      </AppCorner>
      <TitleBar>
        <QuickBar>
          <QuickButton aria-label='新建'><Icon name='newFile' size={13} /></QuickButton>
          <QuickButton aria-label='打开'><Icon name='open' size={13} /></QuickButton>
          <QuickButton aria-label='保存'><Icon name='save' size={12} /></QuickButton>
          <QuickButton aria-label='打印'><Icon name='print' size={13} /></QuickButton>
          <QuickButton aria-label='放弃'><Icon name='undo' size={13} /></QuickButton>
          <QuickButton $narrow aria-label='放弃列表'><Caret /></QuickButton>
          <QuickButton aria-label='重做'><Icon name='redo' size={13} /></QuickButton>
          <QuickButton $narrow aria-label='重做列表'><Caret /></QuickButton>
          <Workspace>
            <Icon name='gear' size={13} />
            <select aria-label='工作空间'><option>Civil 3D</option></select>
            <Caret $big />
          </Workspace>
          <QuickMenu aria-label='自定义'><Caret $big /></QuickMenu>
        </QuickBar>
        <Title><span>AutoCAD Civil 3D</span><span>Drawing1.dwg</span></Title>
        <InfoCenter>
          <SearchToggle aria-label='搜索'>▶</SearchToggle>
          <SearchInput aria-label='搜索' placeholder='键入关键字或短语' />
          <QuickButton aria-label='查找'><Icon name='binocular' size={13} /></QuickButton>
          <SignIn><Icon name='user' size={13} />登录</SignIn>
          <QuickButton $narrow aria-label='登录列表'><Caret /></QuickButton>
          <QuickButton aria-label='Exchange'><Icon name='exchange' size={13} /></QuickButton>
          <QuickButton aria-label='A360'><Icon name='app360' size={13} /></QuickButton>
          <QuickButton $narrow aria-label='A360 列表'><Caret /></QuickButton>
          <QuickButton $narrow aria-label='更多' />
          <QuickButton aria-label='帮助'><Icon name='help' size={13} /></QuickButton>
          <QuickButton $narrow aria-label='帮助列表'><Caret /></QuickButton>
        </InfoCenter>
        <WinButtons>
          <WinButton aria-label='最小化'><svg width='9' height='9'><path d='M0 4.5h9' stroke='#aaa' /></svg></WinButton>
          <WinButton aria-label='最大化'><svg width='9' height='9'><path d='M.5.5h8v8h-8z' fill='none' stroke='#888' /></svg></WinButton>
          <WinButton aria-label='关闭'><svg width='9' height='9'><path d='M.5.5l8 8M8.500.5l-8 8' stroke='#aaa' /></svg></WinButton>
        </WinButtons>
      </TitleBar>
      <Tabs>
        {tabs.map(name => (
          <Tab key={name} $active={name === tab} onClick={() => setTab(name)}>{name}</Tab>
        ))}
        <Blank />
        <Tab aria-label='功能区'><Icon name='featured' size={10} /><Caret $light /></Tab>
      </Tabs>
    </Header>

    <Ribbon>
      <Panel title='选项板' width={83} pad={4} cols='42px 18px 18px' hot>
        <BigButton $on><Icon name='wrench' size={28} /><BigLabel>工具空间</BigLabel></BigButton>
        <Cell $on aria-label='面板'><Icon name='panel' /></Cell>
        <Cell $on aria-label='特性'><Icon name='props' /></Cell>
        <Cell $on aria-label='测量'><Icon name='survey' /></Cell>
        <Cell $on aria-label='工具箱'><Icon name='toolbox' /></Cell>
        <LayerButton aria-label='图纸'><Icon name='sheet' /></LayerButton>
        <LayerButton aria-label='选项'><Icon name='tablet' /></LayerButton>
      </Panel>
      <Panel title='创建地面数据' width={81}>
        <Commands items={[['importSurvey', '导入测量数据'], ['pointNew', '点', true], ['surfaceNew', '曲面', true]]} />
      </Panel>
      <Panel title='创建设计' width={172} cols='59px 58px 1fr'>
        <Commands
          items={[
            ['parcel', '地块', true], ['align', '路线', true], ['crossNew', '交点', true],
            ['feature', '要素线', true], ['profile', '纵断面', true], ['assemblyNew', '装配', true],
            ['grading', '放坡', true], ['road', '道路'], ['pipesNew', '管网', true]
          ]}
        />
      </Panel>
      <Panel title='纵断面图和横断面图' width={90} pad={12} plain>
        <Commands items={[['profView', '纵断面图', true], ['sample', '采样线'], ['secView', '横断面图', true]]} />
      </Panel>
      <Panel title='绘制' width={80} pad={2} cols='27px 31px 19px'>
        {['line', 'arc', 'pline', 'xline', 'circle', 'rect', 'spline', 'ellipse', 'hatch'].map((name, i) => (
          <Cell key={name} aria-label={name}><Icon name={name} />{i % 3 < 2 && <Caret />}</Cell>
        ))}
      </Panel>
      <Panel title='修改' width={171} pad={4} cols='44px 45px 56px 20px'>
        <Commands items={[['move', '移动'], ['rotate', '旋转'], ['trim', '修剪', true]]} />
        <Cell aria-label='删除'><Icon name='brush' /></Cell>
        <Commands items={[['copy', '复制'], ['mirror', '镜像'], ['fillet', '圆角', true]]} />
        <Cell aria-label='分解'><Icon name='explode' /></Cell>
        <Commands items={[['stretch', '拉伸'], ['scale', '缩放'], ['array', '阵列', true]]} />
        <Cell aria-label='偏移'><Icon name='offset' /></Cell>
      </Panel>
      <Panel title='图层' width={161} pad={1}>
        <LayerTools>
          {[['lay1', 'lay2'], ['lay3', 'lay4'], ['lay5', 'lay6'], ['lay7', 'lay8']].map(pair => (
            <LayerPair key={pair[0]}>
              {pair.map(name => <LayerButton key={name} aria-label={name}><Icon name={name} /></LayerButton>)}
            </LayerPair>
          ))}
        </LayerTools>
        <Combo>
          <select aria-label='图层状态'><option>未保存的图层状态</option></select>
          <Caret $big />
        </Combo>
        <LayerCombo>
          <Icon name='bulb' size={13} />
          <Icon name='sun' size={13} />
          <Icon name='lock' size={14} />
          <Icon name='swatch' size={13} />
          <select aria-label='图层'><option>0</option></select>
          <Caret $big />
        </LayerCombo>
      </Panel>
      <Panel title='剪贴板' width={58} pad={2} cols='36px 19px' plain>
        <BigButton><Icon name='paste' size={28} /><BigLabel>粘贴</BigLabel><Caret /></BigButton>
        <Cell aria-label='剪切'><Icon name='cut' size={13} /></Cell>
        <Cell aria-label='复制'><Icon name='pages' /></Cell>
        <Cell aria-label='特性匹配'><Icon name='match' /></Cell>
      </Panel>
    </Ribbon>

    <Body>
      <Toolspace>
        <ToolspaceTitle>工具空间</ToolspaceTitle>
        <ToolspaceBar>
          <Icon name='find' />
          <Spacer />
          <Icon name='treeTool' />
          <Icon name='window' />
          <Icon name='helpBox' />
        </ToolspaceBar>
        <ViewSelect>
          <select aria-label='视图'><option>当前图形视图</option></select>
          <svg width='8' height='6' aria-hidden='true'><path d='M1 1l3 3 3-3' fill='none' stroke='#666' /></svg>
        </ViewSelect>
        <Tree>
          <TreeRow $bold>
            <Toggle aria-label='Drawing1'>-</Toggle>
            <Icon name='file' />
            Drawing1
          </TreeRow>
          <Branch items={drawing} rail />
          <TreeRow>
            <Toggle aria-label='数据快捷方式'>-</Toggle>
            <Icon name='shortcut' />
            数据快捷方式 []
          </TreeRow>
          <Branch items={shortcuts} />
        </Tree>
        <Preview />
      </Toolspace>
      <SideTabs>
        {['浏览', '设定', '测量', '工具箱'].map(name => (
          <SideTab key={name} $active={name === side} onClick={() => setSide(name)}><span>{name}</span></SideTab>
        ))}
      </SideTabs>

      <Canvas>
        <ViewBar>
          <span>[−][俯视][二维线框]</span>
          <DocButtons>
            <DocButton aria-label='最小化'><svg width='8' height='8'><path d='M0 6h8' stroke='#eee' strokeWidth='2' /></svg></DocButton>
            <DocButton aria-label='还原'><svg width='8' height='8'><path d='M1 3h4v4H1zM3 3V1h4v4H5' fill='none' stroke='#eee' strokeWidth='1.500' /></svg></DocButton>
            <DocButton aria-label='关闭'><svg width='8' height='8'><path d='M1 1l6 6M7 1 1 7' stroke='#eee' strokeWidth='2' /></svg></DocButton>
          </DocButtons>
        </ViewBar>
        <Compass>
          <CompassMark $area='1 / 2'>北</CompassMark>
          <CompassMark $area='2 / 1'>西</CompassMark>
          <CubeFace>上</CubeFace>
          <CompassMark $area='2 / 3'>东</CompassMark>
          <CompassMark $area='3 / 2'>南</CompassMark>
        </Compass>
        <UcsButton>未命名</UcsButton>
        <NavBar>
          {['wheel', 'hand', 'zoomAll', 'orbit', 'motion'].map(name => (
            <NavButton key={name} aria-label={name}><Icon name={name} size={18} /></NavButton>
          ))}
        </NavBar>
        <UcsMark>
          <svg width='16' height='25' aria-hidden='true'>
            <path d='M4 2l4 5 4-5M8 7v5M2.500 17v8' fill='none' stroke='#b7bbbf' />
          </svg>
        </UcsMark>
      </Canvas>

      <ToolDock>
        <ToolStrip>
          {toolGroups.map(names => <ToolButtons key={names[0]} names={names} />)}
        </ToolStrip>
        <ToolStrip $short>
          <ToolButtons names={['t25', 't26', 't14']} />
        </ToolStrip>
      </ToolDock>
    </Body>

    <Mark>
      <MarkLogo width='60' height='72' viewBox='0 0 60 72' aria-hidden='true'>
        <path d='M4 29 28 18c10-3 14 3 8 9-4 3-9 5-13 9-5 5-4 18-2 30l-6 1z' fill='#2743a8' />
        <path d='M5 31l8 2 7 28-4 5z' fill='#2a36c4' />
        <path d='M22 60c-2-16 5-25 20-28 8 3 6 16-4 22-5 3-10 4-16 6z' fill='#3c5263' stroke='#8697a8' />
        <path d='M2 21 31 9c15-5 22 8 11 19 15 4 13 19 2 27-7 5-17 8-27 14l4-7c10-4 17-6 21-11 6-8 4-17-6-20l-2-1c9-5 13-16-1-15L2 26z' fill='#a9adb5' />
      </MarkLogo>
      <MarkText $left={52} $bottom={37} $size={36} $heavy>不迷路资源库</MarkText>
      <MarkText $left={84} $bottom={26} $size={19}>www.bmlzyk.com</MarkText>
    </Mark>
  </Window>
}
